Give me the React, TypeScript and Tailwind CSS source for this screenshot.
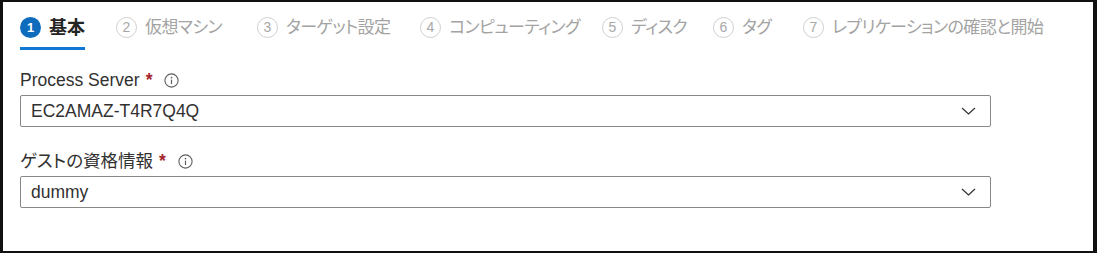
import React from 'react';

const tabs = [
  { n: 1, label: '基本', w: 'w-[96px]', active: true },
  { n: 2, label: '仮想マシン', w: 'w-[141px]' },
  { n: 3, label: 'ターゲット設定', w: 'w-[163px]' },
  { n: 4, label: 'コンピューティング', w: 'w-[182px]' },
  { n: 5, label: 'ディスク', w: 'w-[111px]' },
  { n: 6, label: 'タグ', w: 'w-[90px]' },
  { n: 7, label: 'レプリケーションの確認と開始', w: 'w-[240px]' },
];

const InfoIcon = () => (
  <svg width="15" height="15" viewBox="0 0 15 15" className="ml-[12px] shrink-0">
    <circle cx="7.5" cy="7.5" r="6.6" fill="none" stroke="#605e5c" strokeWidth="1.1" />
    <circle cx="7.5" cy="4.6" r="0.85" fill="#605e5c" />
    <path d="M7.5 6.6V11" stroke="#605e5c" strokeWidth="1.2" />
  </svg>
);

const Chevron = () => (
  <svg width="15" height="8" viewBox="0 0 15 8" className="shrink-0">
    <path d="M1 1l6.5 6 6.5-6" fill="none" stroke="#323130" strokeWidth="1.2" />
  </svg>
);

const Field = ({ label, value, top }: { label: string; value: string; top: string }) => (
  <div className={top}>
    <div className="flex items-center h-[24px] text-[17.5px] text-[#323130]">
      <span>{label}</span>
      <span className="ml-[6px] text-[#a4262c] font-bold">*</span>
      <InfoIcon />
    </div>
    <div className="mt-[3px] w-[971px] h-[32px] border border-[#8a8886] rounded-[2px] flex items-center justify-between pl-[10px] pr-[14px]">
      <span className="text-[17.5px] text-[#323130]">{value}</span>
      <Chevron />
    </div>
  </div>
);

export default function App() {
  return (
    <div
      className="w-[1097px] h-[253px] bg-white border-[#111] border-l-[3px] border-t-[2px] border-r-[4px] border-b-[2px] box-border pl-[17px] [font-feature-settings:'palt']"
      style={{ fontFamily: '"Liberation Sans", "Noto Sans CJK JP", sans-serif' }}
    >
      <div className="flex h-[48px]">
        {tabs.map((t) => (
          <div key={t.n} className={'shrink-0 ' + t.w}>
            <div
              className={
                'inline-flex items-center gap-[8px] h-[48px] pt-[6px] border-b-[3px] box-border whitespace-nowrap ' +
                (t.active ? 'border-[#0f78d4]' : 'border-transparent')
              }
            >
              {t.active ? (
                <span className="w-[21px] h-[21px] rounded-full bg-[#0f6cbd] text-white text-[13px] font-bold flex items-center justify-center">
                  1
                </span>
              ) : (
                <span className="w-[21px] h-[21px] rounded-full border-[1.5px] border-[#cfcfcf] text-[#a8a8a8] text-[14px] flex items-center justify-center box-border">
                  {t.n}
                </span>
              )}
              <span
                className={
                  'leading-none ' +
                  (t.active
                    ? 'text-[18px] text-[#252423] font-bold'
                    : 'text-[17px] text-[#a3a3a3] tracking-[-0.6px]')
                }
              >
                {t.label}
              </span>
            </div>
          </div>
        ))}
      </div>
      <Field label="Process Server" value="EC2AMAZ-T4R7Q4Q" top="mt-[18px]" />
      <Field label="ゲストの資格情報" value="dummy" top="mt-[22px]" />
    </div>
  );
}
